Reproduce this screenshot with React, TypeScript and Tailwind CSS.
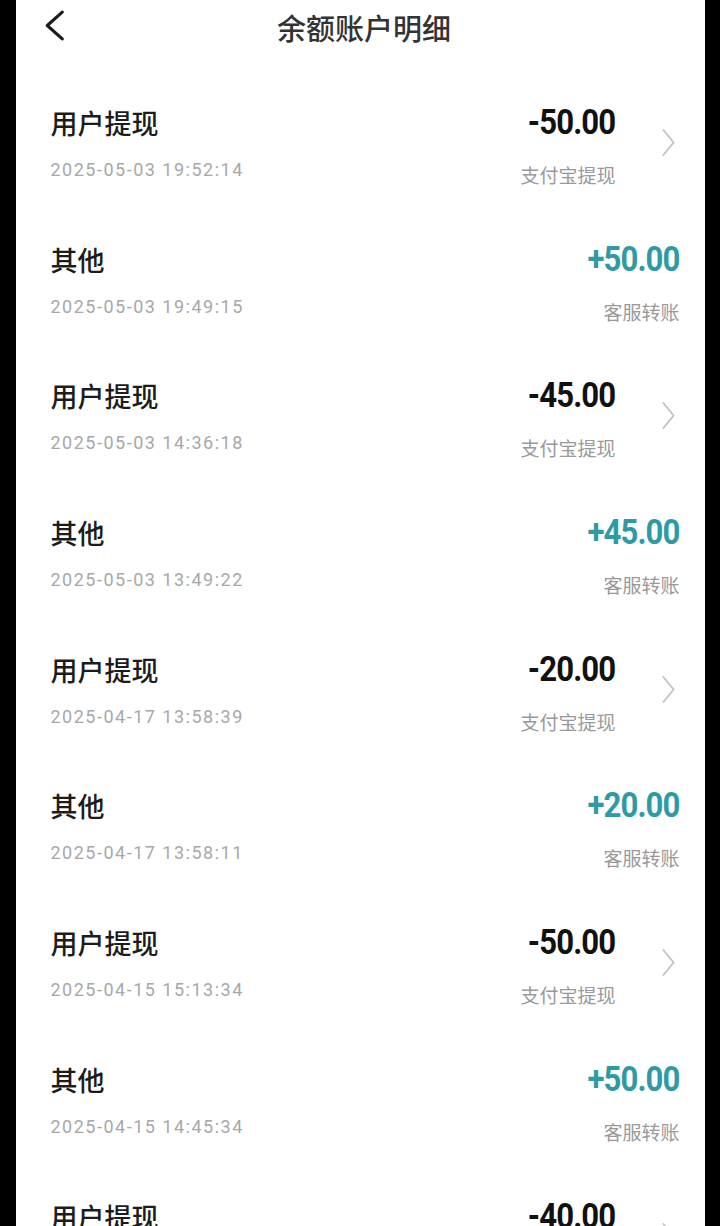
import React from "react";

type Record = {
  title: string;
  time: string;
  amount: string;
  sub: string;
  income: boolean;
};

const records: Record[] = [
  { title: "用户提现", time: "2025-05-03 19:52:14", amount: "-50.00", sub: "支付宝提现", income: false },
  { title: "其他", time: "2025-05-03 19:49:15", amount: "+50.00", sub: "客服转账", income: true },
  { title: "用户提现", time: "2025-05-03 14:36:18", amount: "-45.00", sub: "支付宝提现", income: false },
  { title: "其他", time: "2025-05-03 13:49:22", amount: "+45.00", sub: "客服转账", income: true },
  { title: "用户提现", time: "2025-04-17 13:58:39", amount: "-20.00", sub: "支付宝提现", income: false },
  { title: "其他", time: "2025-04-17 13:58:11", amount: "+20.00", sub: "客服转账", income: true },
  { title: "用户提现", time: "2025-04-15 15:13:34", amount: "-50.00", sub: "支付宝提现", income: false },
  { title: "其他", time: "2025-04-15 14:45:34", amount: "+50.00", sub: "客服转账", income: true },
  { title: "用户提现", time: "2025-04-15 14:40:12", amount: "-40.00", sub: "支付宝提现", income: false },
];

const cjk = "font-['Noto_Sans_CJK_SC',sans-serif]";

const ChevronRight = ({ className }: { className?: string }) => (
  <svg viewBox="0 0 14 30" className={className} fill="none" stroke="currentColor" strokeLinecap="round" strokeLinejoin="round">
    <path d="M1.5 1.5 L12.5 15 L1.5 28.5" strokeWidth="2" />
  </svg>
);

const ChevronLeft = ({ className }: { className?: string }) => (
  <svg viewBox="0 0 20 30" className={className} fill="none" stroke="currentColor" strokeLinecap="round" strokeLinejoin="round">
    <path d="M17.5 2 L3 15 L17.5 28" strokeWidth="3" />
  </svg>
);

const Row = ({ r }: { r: Record }) => (
  <div className="h-[136.7px] shrink-0 flex items-start pt-[37px] pl-[35px] pr-[25px]">
    {/* left */}
    <div className="flex-1 min-w-0">
      <div className={`${cjk} text-[27px] leading-[36px] font-medium text-[#1c1c1c]`}>{r.title}</div>
      <div className="mt-[17px] font-['Roboto',sans-serif] text-[18px] leading-[24px] tracking-[1.5px] text-[#a8a8a8]">{r.time}</div>
    </div>
    {/* right */}
    <div className="flex items-start">
      <div className="flex flex-col items-end">
        <div
          className={`inline-block origin-right scale-x-[0.89] font-['Roboto',sans-serif] font-bold text-[35px] leading-[36px] tracking-[-1px] ${
            r.income ? "text-[#2e9ba4]" : "text-[#111]"
          }`}
        >
          {r.amount}
        </div>
        <div className={`${cjk} mt-[22px] text-[19px] leading-[24px] text-[#999]`}>{r.sub}</div>
      </div>
      {!r.income && (
        <div className="ml-[46px] mr-[5px] mt-[23px]">
          <ChevronRight className="w-[13px] h-[29px] text-[#c2c2c2]" />
        </div>
      )}
    </div>
  </div>
);

export default function App() {
  return (
    <div className="w-[720px] h-[1226px] bg-black flex justify-center overflow-hidden">
      <div className="w-[689px] h-full bg-white flex flex-col overflow-hidden">
        {/* Header */}
        <div className="h-[54px] shrink-0 relative flex items-center justify-center">
          <div className="absolute left-[28px] top-[10px]">
            <ChevronLeft className="w-[21px] h-[31px] text-[#1c1c1c]" />
          </div>
          <div className={`${cjk} text-[29px] leading-[36px] font-medium text-[#333] ml-[8px]`}>余额账户明细</div>
        </div>
        {/* List */}
        <div className="pt-[14px] flex flex-col">
          {records.map((r, i) => (
            <Row key={i} r={r} />
          ))}
        </div>
      </div>
    </div>
  );
}
